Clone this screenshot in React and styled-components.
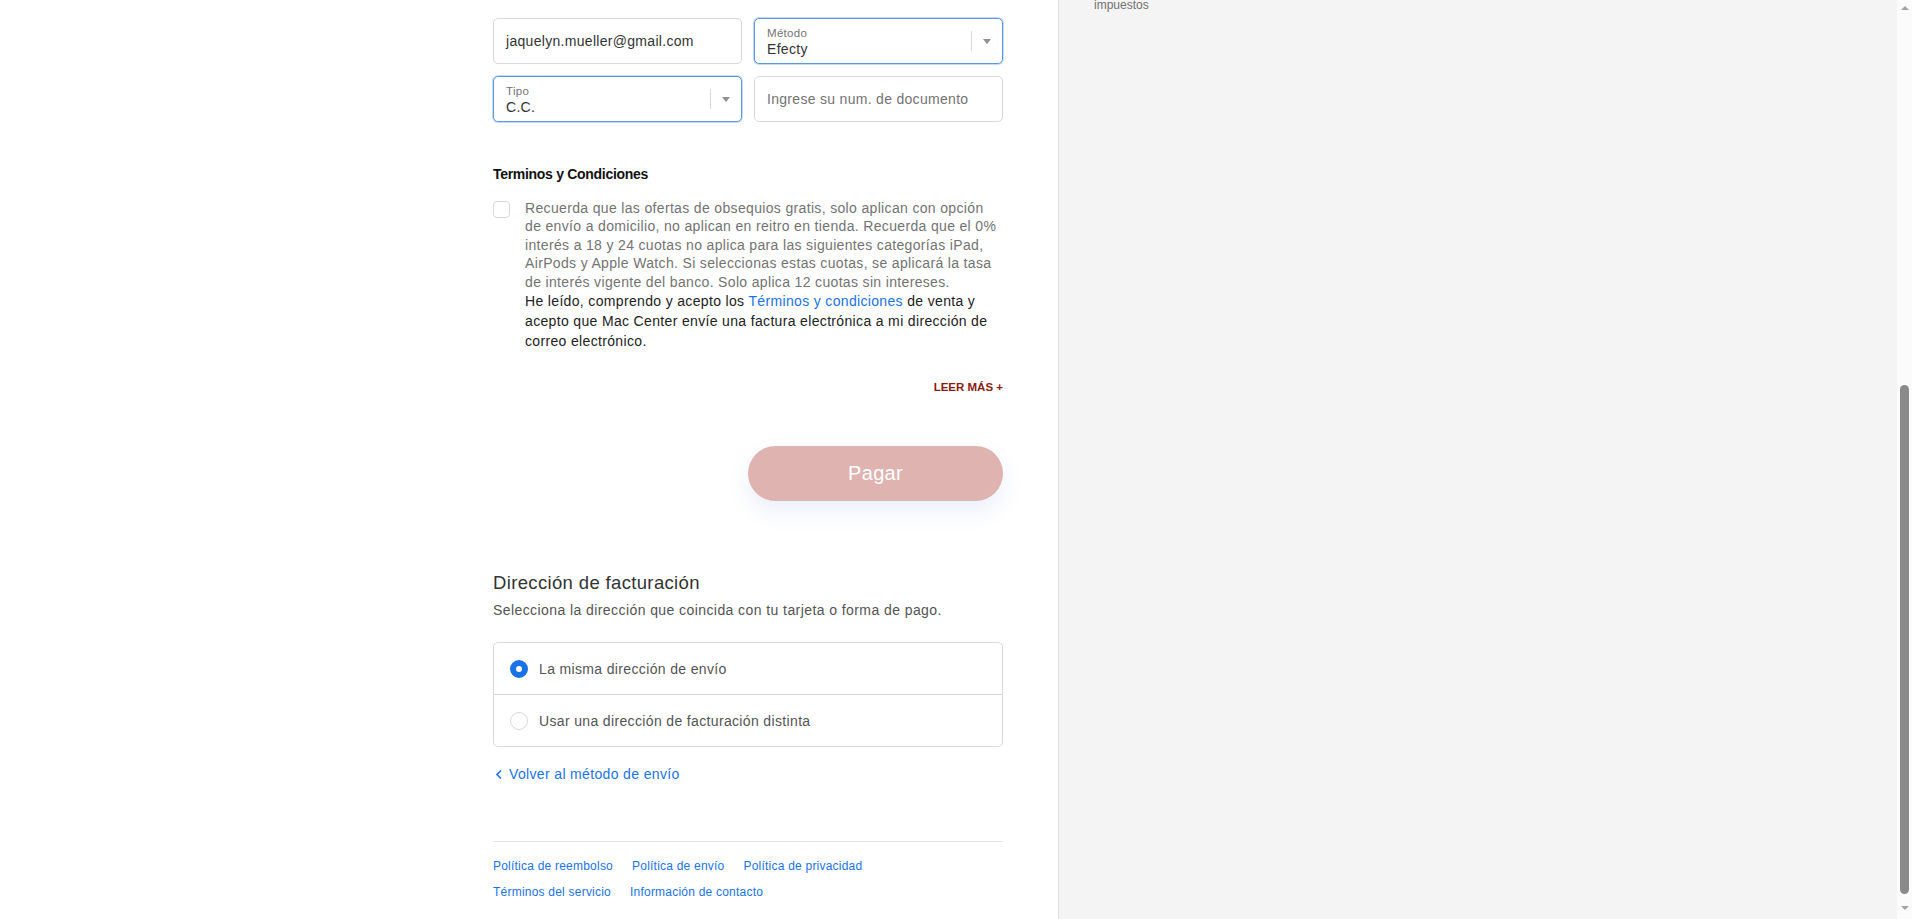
import React, { useState } from 'react';
import styled, { createGlobalStyle } from 'styled-components';

const GlobalStyle = createGlobalStyle`
	html, body {
		margin: 0;
		padding: 0;
		height: 100%;
		overflow: hidden;
	}
	body {
		font-family: 'Liberation Sans', Arial, sans-serif;
		color: #333;
		background: #fff;
		letter-spacing: 0.3px;
	}
`;

function SelectField({ label, value, focused }) {
	return (
		<Field $focused={focused}>
			<div className='inner'>
				<span className='label'>{label}</span>
				<span className='value'>{value}</span>
			</div>
			<div className='caret'>
				<span />
			</div>
		</Field>
	);
}

function App() {
	const [accepted, setAccepted] = useState(false);
	const [billing, setBilling] = useState('same');

	return (
		<Page>
			<GlobalStyle />
			<Main>
				<Content>
					<FieldGrid>
						<Field>
							<span className='text'>jaquelyn.mueller@gmail.com</span>
						</Field>
						<SelectField label='Método' value='Efecty' focused />
						<SelectField label='Tipo' value='C.C.' focused />
						<Field>
							<span className='text placeholder'>Ingrese su num. de documento</span>
						</Field>
					</FieldGrid>

					<Terms>
						<h3>Terminos y Condiciones</h3>
						<div className='row'>
							<Checkbox $checked={accepted} onClick={() => setAccepted(!accepted)} />
							<div className='copy'>
								<p className='muted'>
									Recuerda que las ofertas de obsequios gratis, solo aplican con opción de envío a domicilio, no
									aplican en reitro en tienda. Recuerda que el 0% interés a 18 y 24 cuotas no aplica para las
									siguientes categorías iPad, AirPods y Apple Watch. Si seleccionas estas cuotas, se aplicará la
									tasa de interés vigente del banco. Solo aplica 12 cuotas sin intereses.
								</p>
								<p className='accept'>
									He leído, comprendo y acepto los <a href='#'>Términos y condiciones</a> de venta y acepto que Mac
									Center envíe una factura electrónica a mi dirección de correo electrónico.
								</p>
							</div>
						</div>
						<ReadMore>LEER MÁS +</ReadMore>
					</Terms>

					<Actions>
						<PayButton>Pagar</PayButton>
					</Actions>

					<Billing>
						<h2>Dirección de facturación</h2>
						<p>Selecciona la dirección que coincida con tu tarjeta o forma de pago.</p>
						<RadioList>
							<RadioRow onClick={() => setBilling('same')}>
								<Radio $checked={billing === 'same'} />
								<span>La misma dirección de envío</span>
							</RadioRow>
							<RadioRow onClick={() => setBilling('other')}>
								<Radio $checked={billing === 'other'} />
								<span>Usar una dirección de facturación distinta</span>
							</RadioRow>
						</RadioList>
					</Billing>

					<BackLink href='#'>
						<svg width='8' height='11' viewBox='0 0 8 11'>
							<path d='M6 1.5 2 5.5l4 4' fill='none' stroke='currentColor' strokeWidth='1.6' />
						</svg>
						Volver al método de envío
					</BackLink>

					<Footer>
						<ul>
							<li><a href='#'>Política de reembolso</a></li>
							<li><a href='#'>Política de envío</a></li>
							<li><a href='#'>Política de privacidad</a></li>
							<li><a href='#'>Términos del servicio</a></li>
							<li><a href='#'>Información de contacto</a></li>
						</ul>
					</Footer>
				</Content>
			</Main>

			<Sidebar>
				<span className='taxes'>impuestos</span>
			</Sidebar>

			<Scrollbar>
				<span className='arrow up' />
				<span className='thumb' />
				<span className='arrow down' />
			</Scrollbar>
		</Page>
	);
}

const Page = styled.div`
	display: flex;
	height: 919px;
	overflow: hidden;
`;

const Main = styled.main`
	flex: 0 0 1058px;
	display: flex;
	justify-content: flex-end;
	padding-right: 55px;
	box-sizing: border-box;
	background: #fff;
`;

const Content = styled.div`
	width: 510px;
	padding-top: 18px;
`;

const FieldGrid = styled.div`
	display: grid;
	grid-template-columns: 1fr 1fr;
	gap: 12px 12px;
`;

const Field = styled.div`
	display: flex;
	align-items: center;
	height: 46px;
	box-sizing: border-box;
	border: 1px solid ${(p) => (p.$focused ? '#5b9ae0' : '#d9d9d9')};
	box-shadow: ${(p) => (p.$focused ? '0 0 0 1px rgba(91,154,224,0.35)' : 'none')};
	border-radius: 5px;
	background: #fff;
	padding: 0 0 0 12px;
	font-size: 14px;

	.text {
		color: #333;
	}
	.placeholder {
		color: #737373;
	}

	.inner {
		flex: 1;
		display: flex;
		flex-direction: column;
		padding-top: 1px;

		.label {
			font-size: 11.5px;
			color: #737373;
			line-height: 14px;
		}
		.value {
			font-size: 14px;
			color: #333;
			line-height: 18px;
		}
	}

	.caret {
		display: flex;
		align-items: center;
		justify-content: center;
		width: 30px;
		height: 20px;
		border-left: 1px solid #d9d9d9;

		span {
			width: 0;
			height: 0;
			border-left: 4.5px solid transparent;
			border-right: 4.5px solid transparent;
			border-top: 5px solid #919191;
		}
	}
`;

const Terms = styled.section`
	margin-top: 42.5px;

	h3 {
		margin: 0 0 16.5px;
		font-size: 14px;
		font-weight: 700;
		color: #111;
		line-height: 18px;
		letter-spacing: -0.3px;
	}

	.row {
		display: flex;
		gap: 15px;
	}

	.copy {
		width: 474px;
		font-size: 14px;
		letter-spacing: 0.34px;
	}

	p {
		margin: 0;
	}

	.muted {
		color: #737373;
		line-height: 18.4px;
	}

	.accept {
		color: #222;
		line-height: 20px;

		a {
			color: #1a73e8;
			text-decoration: none;
		}
	}
`;

const Checkbox = styled.span`
	flex: 0 0 auto;
	width: 17px;
	height: 17px;
	margin-top: 2px;
	box-sizing: border-box;
	border: 1px solid #d9d9d9;
	border-radius: 4px;
	background: ${(p) => (p.$checked ? '#1773e6' : '#fff')};
	cursor: pointer;
`;

const ReadMore = styled.div`
	margin-top: 28.5px;
	text-align: right;
	font-size: 11.5px;
	font-weight: 700;
	color: #8b1b12;
	line-height: 14px;
	letter-spacing: 0;
`;

const Actions = styled.div`
	display: flex;
	justify-content: flex-end;
	margin-top: 52px;
`;

const PayButton = styled.button`
	width: 255px;
	height: 55px;
	border: none;
	border-radius: 28px;
	background: #dfb3b0;
	color: #fff;
	font-family: inherit;
	font-size: 20px;
	letter-spacing: 0.3px;
	box-shadow: 0 10px 22px rgba(90, 120, 210, 0.12);
	cursor: pointer;
`;

const Billing = styled.section`
	margin-top: 70px;

	h2 {
		margin: 0;
		font-size: 18.5px;
		font-weight: 400;
		color: #333;
		line-height: 24px;
		letter-spacing: 0.35px;
	}

	p {
		margin: 6.5px 0 0;
		font-size: 14px;
		color: #545454;
		line-height: 18px;
		letter-spacing: 0.42px;
	}
`;

const RadioList = styled.div`
	margin-top: 23px;
	border: 1px solid #d9d9d9;
	border-radius: 5px;
	overflow: hidden;
`;

const RadioRow = styled.label`
	display: flex;
	align-items: center;
	gap: 11px;
	height: 51px;
	padding: 0 16px;
	font-size: 14px;
	color: #545454;
	letter-spacing: 0.35px;
	cursor: pointer;

	& + & {
		border-top: 1px solid #d9d9d9;
	}
`;

const Radio = styled.span`
	width: 18px;
	height: 18px;
	box-sizing: border-box;
	border-radius: 50%;
	border: ${(p) => (p.$checked ? '6.5px solid #1773e6' : '1px solid #d9d9d9')};
	background: #fff;
`;

const BackLink = styled.a`
	display: inline-flex;
	align-items: center;
	gap: 6px;
	margin-top: 18px;
	font-size: 14px;
	color: #1a73e8;
	text-decoration: none;
	line-height: 18px;
	letter-spacing: 0.35px;

	svg {
		margin-left: 2px;
	}
`;

const Footer = styled.footer`
	margin-top: 57px;
	border-top: 1px solid #e6e6e6;
	padding-top: 14px;

	ul {
		list-style: none;
		margin: 0;
		padding: 0;
		max-width: 400px;
		display: flex;
		flex-wrap: wrap;
		column-gap: 19px;
		row-gap: 8px;
	}

	a {
		font-size: 12px;
		color: #1a73e8;
		text-decoration: none;
		line-height: 16px;
		letter-spacing: 0.22px;
	}
`;

const Sidebar = styled.aside`
	flex: 1;
	background: #f4f4f4;
	border-left: 1px solid #e1e1e1;

	.taxes {
		display: block;
		margin-top: -3px;
		padding-left: 35px;
		font-size: 12px;
		color: #717171;
		line-height: 16px;
		letter-spacing: 0;
	}
`;

const Scrollbar = styled.div`
	flex: 0 0 15px;
	display: flex;
	flex-direction: column;
	align-items: center;
	background: #fbfbfb;

	.arrow {
		width: 0;
		height: 0;
		border-left: 4px solid transparent;
		border-right: 4px solid transparent;
	}
	.up {
		margin-top: 6px;
		border-bottom: 4px solid #a3a3a3;
	}
	.down {
		margin: 12px 0 9px;
		border-top: 4px solid #a3a3a3;
	}
	.thumb {
		margin-top: auto;
		width: 9px;
		height: 509px;
		border-radius: 5px;
		background: #8a8a8a;
	}
`;

export default App;
